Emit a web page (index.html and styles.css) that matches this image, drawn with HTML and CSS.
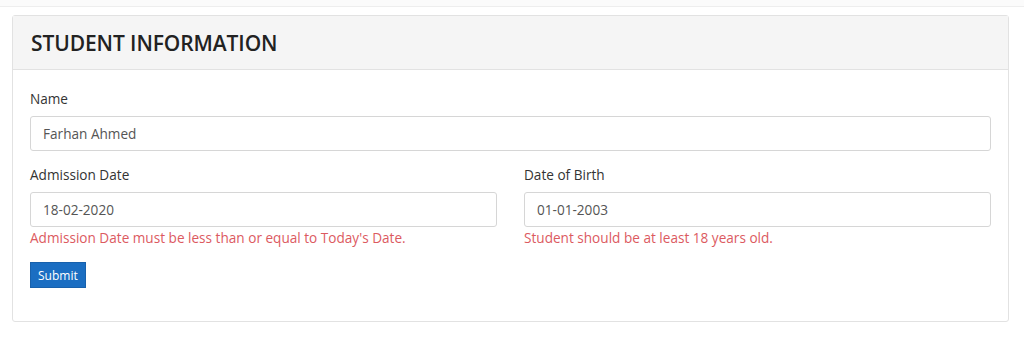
FILE: index.html
```html
<!DOCTYPE html>
<html lang="en">
<head>
    <meta charset="UTF-8">
    <meta name="viewport" content="width=device-width, initial-scale=1.0">
    <title>Student Information</title>
    <link rel="stylesheet" href="styles.css">
</head>
<body>

    <div class="top-bar"></div>

    <!-- Student card -->
    <div class="card">
        <div class="card-header">
            <h3>STUDENT INFORMATION</h3>
        </div>
        <form class="card-body">
            <div class="form-group">
                <label for="name">Name</label>
                <input type="text" id="name" value="Farhan Ahmed">
            </div>
            <div class="form-row">
                <div class="form-group">
                    <label for="admission">Admission Date</label>
                    <input type="text" id="admission" value="18-02-2020">
                    <div class="error">Admission Date must be less than or equal to Today's Date.</div>
                </div>
                <div class="form-group">
                    <label for="dob">Date of Birth</label>
                    <input type="text" id="dob" value="01-01-2003">
                    <div class="error">Student should be at least 18 years old.</div>
                </div>
            </div>
            <button type="submit">Submit</button>
        </form>
    </div>

</body>
</html>
```

FILE: styles.css
```css
/* General Styles */
body {
    font-family: 'Open Sans', sans-serif;
    margin: 0;
    padding: 0 15px 0 12px;
    background: #fff;
    color: #333;
    font-size: 13.6px;
}

.top-bar {
    height: 6px;
    margin: 0 -15px 8px -12px;
    border-bottom: 1px solid #eee;
    background: #fbfbfb;
}

.card {
    border: 1px solid #e2e2e2;
    border-radius: 3px;
    background: #fff;
}

.card-header {
    background: #f5f5f5;
    border-bottom: 1px solid #e2e2e2;
    height: 53px;
    display: flex;
    align-items: center;
    padding: 0 18px;
}

.card-header h3 {
    margin: 0;
    font-size: 21px;
    font-weight: 600;
    color: #222;
    letter-spacing: -0.1px;
}

.card-body {
    padding: 20px 17px 33px 17px;
}

.form-row {
    display: grid;
    grid-template-columns: 1fr 1fr;
    column-gap: 27px;
}

.form-group {
    margin-bottom: 15px;
}

.form-row .form-group {
    margin-bottom: 15px;
}

.form-group label {
    display: block;
    margin-bottom: 8px;
    line-height: 18px;
    color: #333;
}

.form-group input {
    display: block;
    width: 100%;
    height: 35px;
    padding: 0 12px;
    border: 1px solid #d6d6d6;
    border-radius: 3px;
    box-sizing: border-box;
    font-family: inherit;
    font-size: 13.6px;
    color: #555;
}

.error {
    color: #dc5a5f;
    margin-top: 2px;
    line-height: 18px;
}

button {
    background-color: #1b6ec2;
    border: 1px solid #1861ac;
    color: #fff;
    font-family: inherit;
    font-size: 12px;
    height: 26px;
    padding: 0 7px;
    border-radius: 0;
    cursor: pointer;
}
```
